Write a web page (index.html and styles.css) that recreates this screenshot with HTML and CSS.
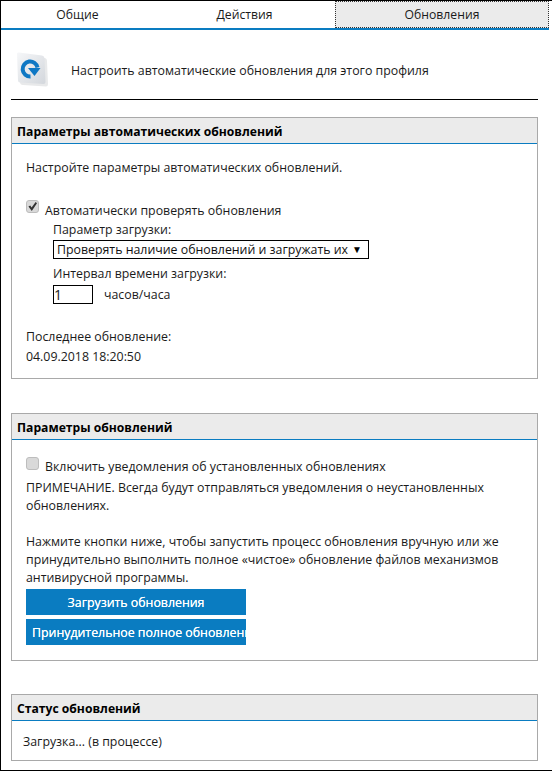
FILE: index.html
```html
<!DOCTYPE html>
<html lang="ru">
<head>
<meta charset="utf-8">
<title>Обновления</title>
<link rel="stylesheet" href="styles.css">
</head>
<body>
<div class="frame">
  <nav class="tabs">
    <div class="tab">Общие</div>
    <div class="tab">Действия</div>
    <div class="tab tab-active">Обновления</div>
  </nav>
  <main class="content">
    <header class="intro">
      <svg class="intro-icon" width="32" height="36" viewBox="0 0 32 36">
        <defs>
          <linearGradient id="tile" x1="0" y1="0" x2="1" y2="1">
            <stop offset="0" stop-color="#f6f7f9"/>
            <stop offset="1" stop-color="#d3d7dc"/>
          </linearGradient>
        </defs>
        <path d="M3 3 L28 6 Q30 6.500 30 9 L31 32 Q31 34.500 29 34.500 L6 33 Q3 33 3 30 Z" fill="#e8e9ea"/>
        <path d="M0 2 Q0 0 2 .5 L25 3.500 Q27.500 4 27.500 6.500 L28.500 30 Q28.500 32 26.500 32 L3 30.500 Q1 30.500 1 28.500 Z" fill="url(#tile)"/>
        <path d="M13.500 24.500 A7.500 7.500 0 1 1 20.500 15.500" fill="none" stroke="#0f78c4" stroke-width="4"/>
        <path d="M11 16 L23.500 16 L17.500 24 Z" fill="#0f78c4"/>
      </svg>
      <span>Настроить автоматические обновления для этого профиля</span>
    </header>
    <hr class="rule">

    <section class="panel panel-auto">
      <h2 class="panel-title">Параметры автоматических обновлений</h2>
      <div class="panel-body">
        <p class="lead">Настройте параметры автоматических обновлений.</p>
        <label class="check check-auto"><input type="checkbox" checked><span>Автоматически проверять обновления</span></label>
        <div class="options">
          <div class="opt-label">Параметр загрузки:</div>
          <div class="select-wrap">
            <select class="select"><option>Проверять наличие обновлений и загружать их</option></select>
            <span class="select-arrow">▼</span>
          </div>
          <div class="opt-label opt-label-second">Интервал времени загрузки:</div>
          <div class="interval"><input class="num" type="text" value="1"><span>часов/часа</span></div>
        </div>
        <div class="last-label">Последнее обновление:</div>
        <div class="last-value">04.09.2018 18:20:50</div>
      </div>
    </section>

    <section class="panel panel-opts">
      <h2 class="panel-title">Параметры обновлений</h2>
      <div class="panel-body">
        <label class="check"><input type="checkbox"><span>Включить уведомления об установленных обновлениях</span></label>
        <p class="note">ПРИМЕЧАНИЕ. Всегда будут отправляться уведомления о неустановленных обновлениях.</p>
        <p class="note note-second">Нажмите кнопки ниже, чтобы запустить процесс обновления вручную или же принудительно выполнить полное «чистое» обновление файлов механизмов антивирусной программы.</p>
        <button class="btn" type="button">Загрузить обновления</button>
        <button class="btn btn-clipped" type="button">Принудительное полное обновление</button>
      </div>
    </section>

    <section class="panel panel-status">
      <h2 class="panel-title">Статус обновлений</h2>
      <div class="status">Загрузка... (в процессе)</div>
    </section>
  </main>
</div>
</body>
</html>
```
FILE: styles.css
```css
* { box-sizing: border-box; }
html, body { margin: 0; padding: 0; background: #fff; }
body {
  font-family: "Open Sans", "Noto Sans", sans-serif;
  font-size: 12.35px;
  color: #1a1a1a;
}
.frame {
  width: 552px;
  height: 771px;
  border-top: 1px solid #000;
  border-left: 1px solid #000;
  border-bottom: 1px solid #000;
  overflow: hidden;
}
.tabs {
  display: grid;
  grid-template-columns: 153px 181px 214px;
  height: 29px;
  border-bottom: 2px solid #0a7cc1;
  width: 548px;
  font-size: 12.2px;
}
.tab {
  display: flex;
  align-items: center;
  justify-content: center;
  height: 27px;
}
.tab-active {
  background: #ebebeb;
  outline: 1px dotted #333;
  outline-offset: -1px;
}
.content { padding: 0 14px 0 10px; }
.intro {
  display: flex;
  align-items: center;
  height: 69px;
  padding: 11px 0 0 6px;
}
.intro-icon { margin-right: 22px; flex: none; align-self: flex-start; margin-top: 11px; }
.rule {
  margin: 0;
  height: 1px;
  border: 0;
  background: #000;
}
.panel { border: 1px solid #a9a9a9; }
.panel-auto { margin-top: 17px; height: 262px; }
.panel-opts { margin-top: 34px; height: 248px; }
.panel-status { margin-top: 33px; height: 67px; }
.panel-title {
  margin: 0;
  height: 26px;
  line-height: 27px;
  padding-left: 5px;
  font-size: 12.15px;
  font-weight: 700;
  color: #000;
  background: #ebebeb;
  border-bottom: 1px solid #0a7cc1;
}
.panel-body { padding: 0 14px; }
.lead { margin: 15px 0 0; line-height: 18px; }
.check { display: flex; align-items: flex-start; line-height: 18px; }
.check-auto { margin-top: 25px; }
.panel-opts .check { margin-top: 18px; }
.check input {
  appearance: none;
  -webkit-appearance: none;
  width: 13px;
  height: 13px;
  margin: -2px 6px 0 0;
  background: #d9d9d9;
  border: 1px solid #bdbdbd;
  border-radius: 3px;
  position: relative;
  flex: none;
}
.panel-opts .check input { margin-top: -1px; }
.check input:checked::before {
  content: "";
  position: absolute;
  inset: 1px;
  background: #333;
  clip-path: polygon(5% 50%, 25% 38%, 40% 62%, 85% 0, 100% 15%, 42% 100%);
}
.options { padding-left: 27px; margin-top: 1px; }
.opt-label { line-height: 18px; }
.opt-label-second { margin-top: 6px; }
.select-wrap { position: relative; width: 316px; height: 19px; margin-top: 1px; }
.select {
  appearance: none;
  -webkit-appearance: none;
  display: block;
  width: 100%;
  height: 100%;
  padding: 0 0 0 3px;
  border: 1px solid #000;
  border-radius: 0;
  background: #fff;
  font-family: inherit;
  font-size: 12.35px;
  color: #111;
}
.select-arrow {
  position: absolute;
  right: 7px;
  top: 3px;
  font-size: 10px;
  line-height: 12px;
  color: #000;
}
.interval { display: flex; align-items: center; margin-top: 2px; }
.num {
  width: 40px;
  height: 19px;
  padding: 0;
  margin-right: 11px;
  border: 1px solid #000;
  border-radius: 0;
  font-family: inherit;
  font-size: 14px;
  color: #1a1a1a;
}
.last-label { margin-top: 24px; line-height: 18px; }
.last-value { margin-top: 2px; line-height: 18px; }
.note { margin: 3px 0 0; line-height: 18px; }
.note-second { margin-top: 18px; }
.btn {
  display: block;
  width: 220px;
  height: 26px;
  padding: 0;
  margin-top: 2px;
  border: 0;
  background: #0a7cc1;
  color: #fff;
  font-family: inherit;
  font-size: 12.35px;
  font-weight: 400;
  text-shadow: 0 0 .6px #fff;
  text-align: center;
  white-space: nowrap;
  overflow: hidden;
}
.btn-clipped { margin-top: 4px; text-align: left; padding-left: 6px; }
.status { padding: 12px 0 0 11px; line-height: 18px; }
```
